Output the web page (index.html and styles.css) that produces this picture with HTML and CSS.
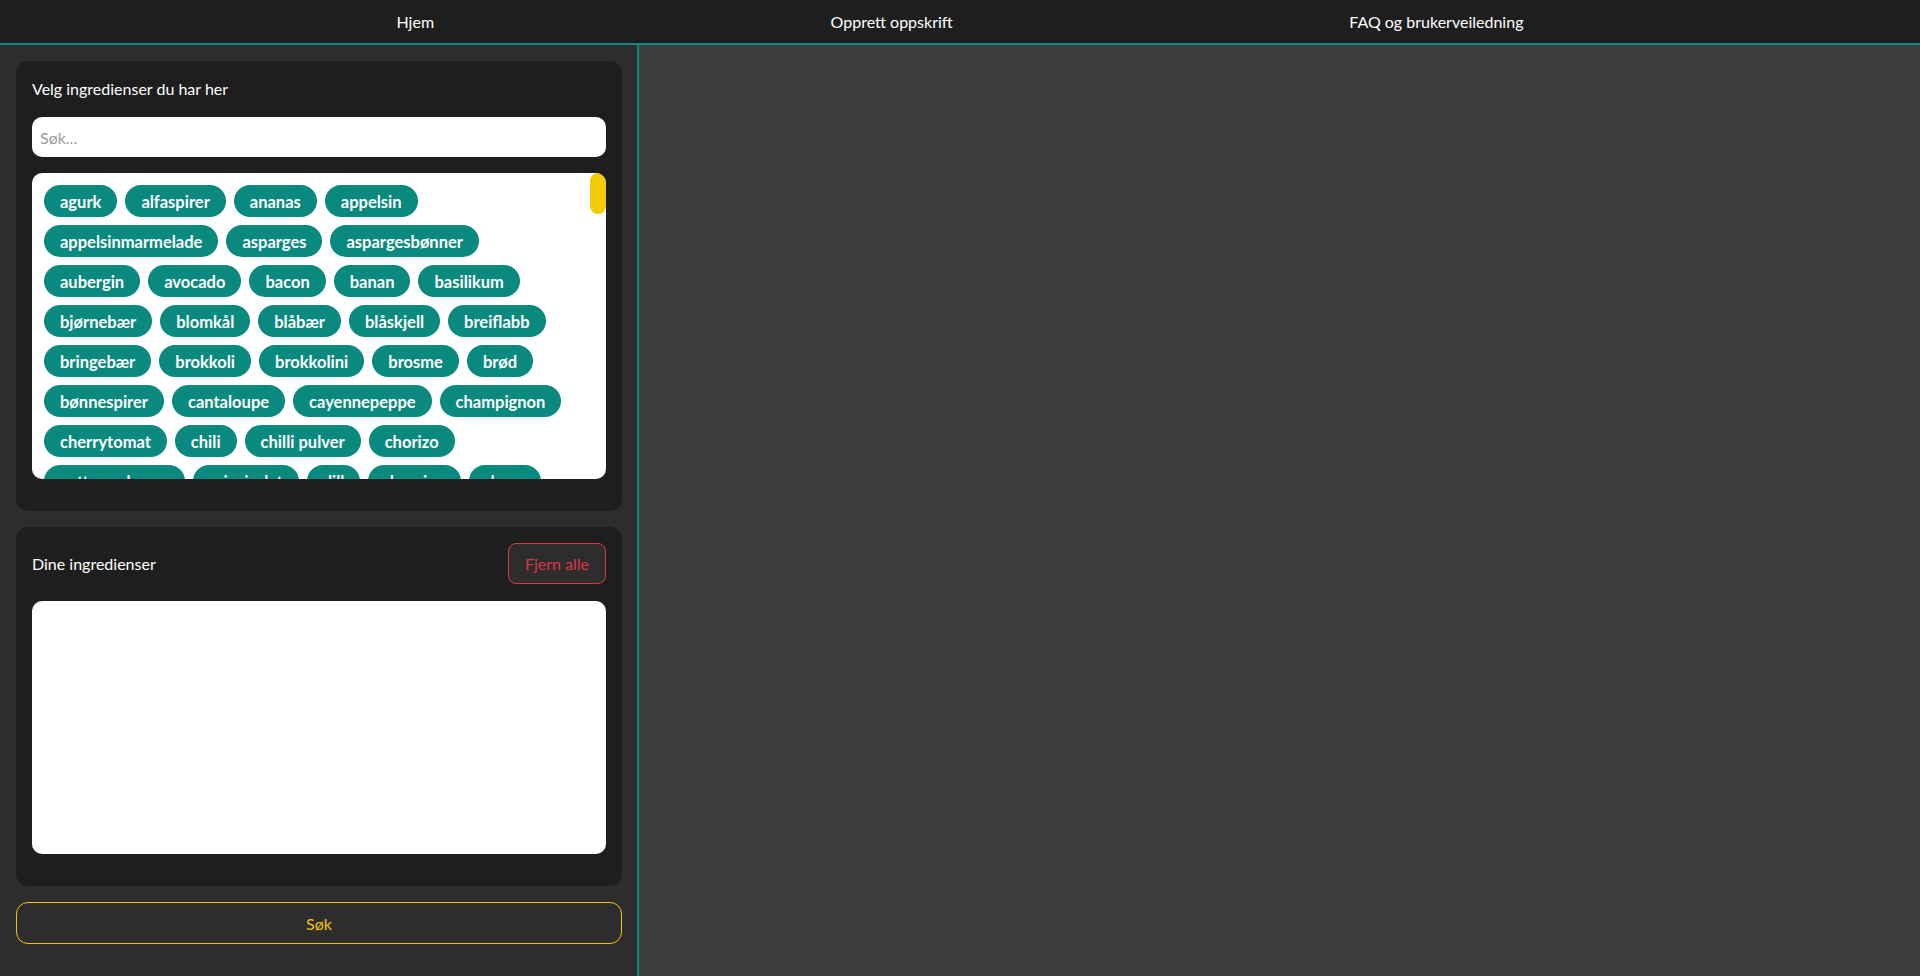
FILE: index.html
```html
<!DOCTYPE html>
<html lang="no">
<head>
<meta charset="utf-8">
<title>Oppskrifter</title>
<link rel="stylesheet" href="styles.css">
</head>
<body>
<nav class="topnav">
  <a class="nav-link" href="#">Hjem</a>
  <a class="nav-link" href="#">Opprett oppskrift</a>
  <a class="nav-link" href="#">FAQ og brukerveiledning</a>
</nav>
<div class="layout">
  <aside class="sidebar">
    <section class="card">
      <div class="card-title">Velg ingredienser du har her</div>
      <input class="search-input" type="text" placeholder="Søk...">
      <div class="ingredient-box">
        <div class="chip-scroll">
        <div class="chip-list">
          <button class="chip">agurk</button><button class="chip">alfaspirer</button><button class="chip">ananas</button><button class="chip">appelsin</button>
          <button class="chip">appelsinmarmelade</button><button class="chip">asparges</button><button class="chip">aspargesbønner</button>
          <button class="chip">aubergin</button><button class="chip">avocado</button><button class="chip">bacon</button><button class="chip">banan</button><button class="chip">basilikum</button>
          <button class="chip">bjørnebær</button><button class="chip">blomkål</button><button class="chip">blåbær</button><button class="chip">blåskjell</button><button class="chip">breiflabb</button>
          <button class="chip">bringebær</button><button class="chip">brokkoli</button><button class="chip">brokkolini</button><button class="chip">brosme</button><button class="chip">brød</button>
          <button class="chip">bønnespirer</button><button class="chip">cantaloupe</button><button class="chip">cayennepeppe</button><button class="chip">champignon</button>
          <button class="chip">cherrytomat</button><button class="chip">chili</button><button class="chip">chilli pulver</button><button class="chip">chorizo</button>
          <button class="chip">cottage cheese</button><button class="chip">crispisalat</button><button class="chip">dill</button><button class="chip">dressing</button><button class="chip">druer</button>
          <button class="chip">eddik</button><button class="chip">egg</button><button class="chip">eggehvite</button><button class="chip">eggeplomme</button><button class="chip">elgkjøtt</button>
          <button class="chip">endive</button><button class="chip">eple</button><button class="chip">epleeddik</button><button class="chip">erter</button><button class="chip">estragon</button>
          <button class="chip">fenalår</button><button class="chip">fennikel</button><button class="chip">feta</button><button class="chip">fiken</button><button class="chip">fiskeboller</button>
          <button class="chip">fiskebuljong</button><button class="chip">fiskekaker</button><button class="chip">fiskesaus</button><button class="chip">flatbrød</button><button class="chip">flesk</button>
          <button class="chip">fløte</button><button class="chip">fløteost</button><button class="chip">frityrolje</button><button class="chip">fårikålkjøtt</button><button class="chip">gammelost</button>
          <button class="chip">garam masala</button><button class="chip">gjær</button><button class="chip">grapefrukt</button><button class="chip">granateple</button><button class="chip">gresskar</button>
          <button class="chip">gresskarkjerner</button><button class="chip">gressløk</button><button class="chip">grovmel</button><button class="chip">grønnkål</button><button class="chip">grønne bønner</button>
          <button class="chip">gulerter</button><button class="chip">gulløk</button><button class="chip">gulrot</button><button class="chip">gulost</button><button class="chip">havre</button>
          <button class="chip">havregryn</button><button class="chip">havremelk</button><button class="chip">hasselnøtter</button><button class="chip">helkornspasta</button><button class="chip">hjortekjøtt</button>
          <button class="chip">honning</button><button class="chip">hummer</button><button class="chip">hvetemel</button><button class="chip">hvitløk</button><button class="chip">hvitost</button>
          <button class="chip">hvitvin</button><button class="chip">hyse</button><button class="chip">hønsebuljong</button><button class="chip">ingefær</button><button class="chip">isbergsalat</button>
          <button class="chip">jalapeño</button><button class="chip">jordbær</button><button class="chip">jordskokk</button><button class="chip">jordnøtter</button><button class="chip">jordnøttsmør</button>
          <button class="chip">kaffe</button><button class="chip">kakao</button><button class="chip">kalkun</button><button class="chip">kalvekjøtt</button><button class="chip">kamskjell</button>
          <button class="chip">kanel</button><button class="chip">kantareller</button><button class="chip">kapers</button><button class="chip">karbonadedeig</button><button class="chip">kardemomme</button>
          <button class="chip">karri</button><button class="chip">kasjunøtter</button><button class="chip">kavring</button><button class="chip">kikerter</button><button class="chip">kiwi</button>
          <button class="chip">kjøttboller</button><button class="chip">kjøttdeig</button><button class="chip">klementin</button><button class="chip">knekkebrød</button><button class="chip">kokosmelk</button>
          <button class="chip">kokosmasse</button><button class="chip">koriander</button><button class="chip">krabbe</button><button class="chip">kremfløte</button><button class="chip">kreps</button>
          <button class="chip">kvarg</button><button class="chip">kveite</button><button class="chip">kyllingbryst</button><button class="chip">kyllingfilet</button><button class="chip">kyllinglår</button>
          <button class="chip">kyllingvinger</button><button class="chip">kålrot</button><button class="chip">laks</button><button class="chip">lammekjøtt</button><button class="chip">lasagneplater</button>
          <button class="chip">laurbærblad</button><button class="chip">lever</button><button class="chip">lime</button><button class="chip">limeblad</button><button class="chip">linser</button>
          <button class="chip">lompe</button><button class="chip">lutefisk</button><button class="chip">løk</button><button class="chip">mais</button><button class="chip">maisenna</button>
          <button class="chip">majones</button><button class="chip">makrell</button><button class="chip">mandler</button><button class="chip">mango</button><button class="chip">margarin</button>
          <button class="chip">marsipan</button><button class="chip">melis</button><button class="chip">melk</button><button class="chip">melon</button><button class="chip">mozzarella</button>
          <button class="chip">multer</button><button class="chip">muskatnøtt</button><button class="chip">mynte</button><button class="chip">nakkekoteletter</button><button class="chip">neper</button>
          <button class="chip">nektarin</button><button class="chip">nudler</button><button class="chip">nøtter</button><button class="chip">oksefilet</button><button class="chip">oksekjøtt</button>
          <button class="chip">oliven</button><button class="chip">olivenolje</button><button class="chip">oregano</button><button class="chip">ost</button><button class="chip">paideig</button>
          <button class="chip">paprika</button><button class="chip">paprikapulver</button><button class="chip">parmesan</button><button class="chip">pasta</button><button class="chip">pastinakk</button>
          <button class="chip">peanøtter</button><button class="chip">pecannøtter</button><button class="chip">pepper</button><button class="chip">pepperoni</button><button class="chip">persille</button>
          <button class="chip">pesto</button><button class="chip">pinjekjerner</button><button class="chip">pistasjnøtter</button><button class="chip">pizzadeig</button><button class="chip">plommer</button>
          <button class="chip">polenta</button><button class="chip">pommes frites</button><button class="chip">potet</button><button class="chip">potetmel</button><button class="chip">purre</button>
          <button class="chip">pære</button><button class="chip">quinoa</button><button class="chip">rabarbra</button><button class="chip">reddik</button><button class="chip">reinsdyrkjøtt</button>
          <button class="chip">reker</button><button class="chip">rips</button><button class="chip">ris</button><button class="chip">risnudler</button><button class="chip">rosenkål</button>
          <button class="chip">rosiner</button><button class="chip">rosmarin</button><button class="chip">rucola</button><button class="chip">rugmel</button><button class="chip">rødbeter</button>
          <button class="chip">rødkål</button><button class="chip">rødløk</button><button class="chip">rødvin</button><button class="chip">rømme</button><button class="chip">safran</button>
          <button class="chip">salami</button><button class="chip">salat</button><button class="chip">salt</button><button class="chip">sardiner</button><button class="chip">sei</button>
          <button class="chip">selleri</button><button class="chip">sellerirot</button><button class="chip">sennep</button><button class="chip">sesamfrø</button><button class="chip">sild</button>
          <button class="chip">sitron</button><button class="chip">sitrongress</button><button class="chip">sjalottløk</button><button class="chip">sjokolade</button><button class="chip">skinke</button>
          <button class="chip">smør</button><button class="chip">solsikkekjerner</button><button class="chip">soyasaus</button><button class="chip">spaghetti</button><button class="chip">spekeskinke</button>
          <button class="chip">spinat</button><button class="chip">squash</button><button class="chip">steinbit</button><button class="chip">stjerneanis</button><button class="chip">sukker</button>
          <button class="chip">sukkererter</button><button class="chip">svinekjøtt</button><button class="chip">svinekoteletter</button><button class="chip">søtpotet</button><button class="chip">tabasco</button>
          <button class="chip">tacokrydder</button><button class="chip">tahini</button><button class="chip">timian</button><button class="chip">tofu</button><button class="chip">tomat</button>
          <button class="chip">tomatpuré</button><button class="chip">torsk</button><button class="chip">tortilla</button><button class="chip">tunfisk</button><button class="chip">tyttebær</button>
          <button class="chip">vaniljesukker</button><button class="chip">valnøtter</button><button class="chip">vannkastanjer</button><button class="chip">vannmelon</button><button class="chip">vårløk</button>
          <button class="chip">wasabi</button><button class="chip">worcestershiresaus</button><button class="chip">yoghurt</button><button class="chip">ørret</button><button class="chip">østers</button><button class="chip">ål</button>
        </div>
        </div>
        <div class="scroll-thumb"></div>
      </div>
    </section>
    <section class="card">
      <div class="card-header">
        <div class="card-title">Dine ingredienser</div>
        <button class="btn-remove">Fjern alle</button>
      </div>
      <div class="selected-box"></div>
    </section>
    <button class="btn-search">Søk</button>
  </aside>
  <main class="content"></main>
</div>
</body>
</html>
```
FILE: styles.css
```css
* { box-sizing: border-box; }

html, body {
  margin: 0;
  height: 100%;
}

body {
  background: #3d3d3d;
  color: #ffffff;
  font-family: Lato, "Noto Sans", sans-serif;
  font-size: 16px;
  overflow: hidden;
}

.topnav {
  height: 45px;
  background: #1e1e1e;
  border-bottom: 2px solid #0a8a7e;
  display: flex;
  justify-content: space-evenly;
  align-items: center;
}

.nav-link {
  color: #ffffff;
  text-decoration: none;
  font-size: 16px;
}

.layout {
  display: flex;
  height: calc(100vh - 45px);
}

.sidebar {
  width: 639px;
  flex: none;
  background: #2d2d2d;
  border-right: 2px solid #0a8a7e;
  padding: 16px 15px 0 16px;
  display: flex;
  flex-direction: column;
  gap: 16px;
}

.content {
  flex: 1;
  background: #3d3d3d;
}

.card {
  background: #1e1e1e;
  border-radius: 12px;
  padding: 16px 16px 32px;
}

.card-title {
  line-height: 24px;
  font-size: 16px;
  color: #ffffff;
}

.search-input {
  display: block;
  width: 100%;
  height: 40px;
  margin: 16px 0;
  border: none;
  border-radius: 10px;
  padding: 0 8px;
  font-family: inherit;
  font-size: 16px;
  color: #222;
  background: #ffffff;
  outline: none;
}

.search-input::placeholder {
  color: #a09aa4;
}

.ingredient-box {
  position: relative;
  height: 306px;
  background: #ffffff;
  border-radius: 10px;
  overflow: hidden;
}

.chip-scroll {
  height: 100%;
  overflow: hidden;
  padding-right: 16px;
}

.scroll-thumb {
  position: absolute;
  top: 0;
  right: 0;
  width: 16px;
  height: 41px;
  background: #f2ca05;
  border-radius: 8px;
}

.chip-list {
  display: flex;
  flex-wrap: wrap;
  gap: 8px;
  padding: 12px;
}

.chip {
  height: 32px;
  padding: 2px 16px 0;
  border: none;
  border-radius: 16px;
  background: #0a8a7e;
  color: #ffffff;
  font-family: inherit;
  font-weight: 700;
  font-size: 16.5px;
  cursor: pointer;
}

.card-header {
  display: flex;
  justify-content: space-between;
  align-items: center;
  margin-bottom: 17px;
}

.btn-remove {
  height: 41px;
  padding: 0 16px;
  background: #2d2d2d;
  border: 1px solid #dc3545;
  border-radius: 8px;
  color: #dc3545;
  font-family: inherit;
  font-size: 16px;
  cursor: pointer;
}

.selected-box {
  height: 253px;
  background: #ffffff;
  border-radius: 10px;
}

.btn-search {
  width: 100%;
  height: 42px;
  flex: none;
  background: transparent;
  border: 1px solid #f2c40f;
  border-radius: 12px;
  color: #f2c40f;
  font-family: inherit;
  font-size: 16px;
  cursor: pointer;
}
```
